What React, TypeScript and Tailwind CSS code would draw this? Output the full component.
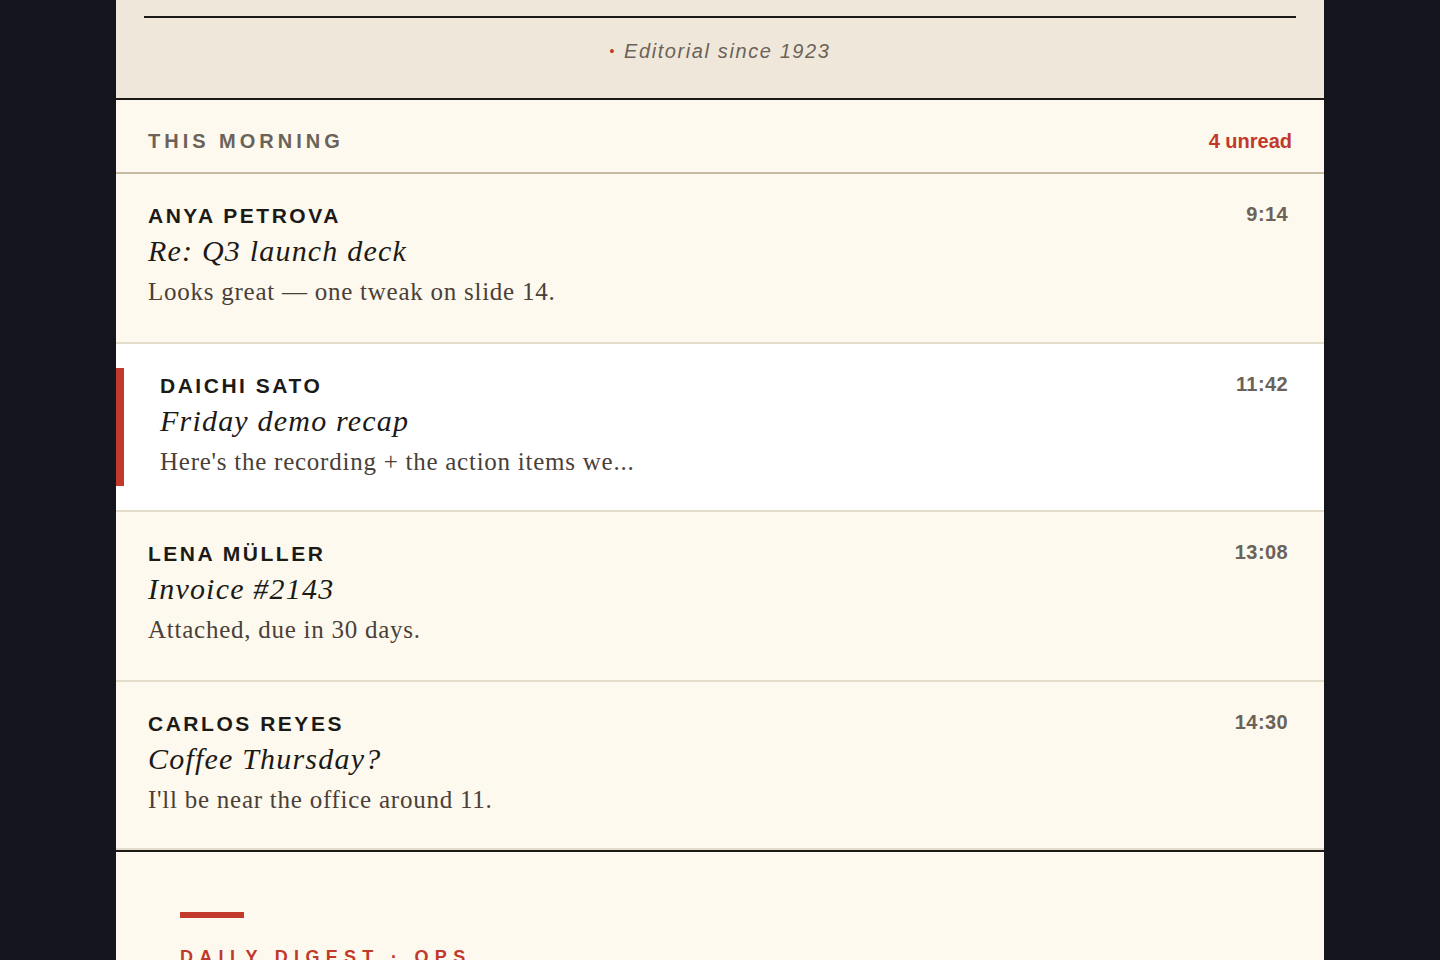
const messages: { from: string; subject: string; preview: string; time: string; active?: boolean }[] = [
  { from: 'Anya Petrova', subject: 'Re: Q3 launch deck', preview: 'Looks great — one tweak on slide 14.', time: '9:14' },
  { from: 'Daichi Sato', subject: 'Friday demo recap', preview: "Here's the recording + the action items we...", time: '11:42', active: true },
  { from: 'Lena Müller', subject: 'Invoice #2143', preview: 'Attached, due in 30 days.', time: '13:08' },
  { from: 'Carlos Reyes', subject: 'Coffee Thursday?', preview: "I'll be near the office around 11.", time: '14:30' },
]

const sans = "font-['Liberation_Sans',Arial,sans-serif]"
const serif = "font-['Liberation_Serif','Times_New_Roman',serif]"

function MessageRow({ m, last }: { m: (typeof messages)[number]; last: boolean }) {
  let cls = 'relative flex items-start justify-between border-b-2 border-[#e4dccb] pr-9 '
  if (m.active) cls += 'bg-white pl-[44px] pt-7 pb-8'
  else if (last) cls += 'bg-[#fdf9ee] pl-8 pt-7 pb-8'
  else cls += 'bg-[#fdf9ee] pl-8 pt-7 pb-[34px]'

  return (
    <div className={cls}>
      {m.active && <span className="absolute bottom-6 left-0 top-6 w-2 bg-[#c0392b]" />}
      <div className="flex flex-col">
        <div className={`${sans} text-[21px] font-bold uppercase leading-[28px] tracking-[0.12em] text-[#1c1a17]`}>
          {m.from}
        </div>
        <div className={`${serif} mt-[3px] text-[30px] italic leading-[36px] tracking-[0.04em] text-[#1c1a17]`}>
          {m.subject}
        </div>
        <div className={`${serif} mt-[7px] text-[25px] leading-[32px] tracking-[0.03em] text-[#4a4038]`}>
          {m.preview}
        </div>
      </div>
      <div className={`${sans} text-[20px] font-bold leading-[24px] tracking-[0.02em] text-[#6b6259]`}>{m.time}</div>
    </div>
  )
}

export default function App() {
  return (
    <div className="min-h-screen bg-[#15151e]">
      <div className="mx-auto w-[1208px]">
        <header className="border-b-2 border-[#1c1a17] bg-[#efe8da] px-7 pb-[33px] pt-4">
          <div className="h-[2px] bg-[#1c1a17]" />
          <div className={`${sans} mt-[19px] flex items-center justify-center gap-2 text-[20px] italic leading-[28px] tracking-[0.08em] text-[#6b6259]`}>
            <span className="text-[14px] not-italic text-[#c0392b]">•</span>
            <span>Editorial since 1923</span>
          </div>
        </header>

        <div className="flex items-start justify-between border-b-2 border-[#c6baa3] bg-[#fdf9ee] pb-[17px] pl-8 pr-8 pt-[27px]">
          <span className={`${sans} text-[20px] font-bold uppercase leading-[28px] tracking-[0.2em] text-[#6b6259]`}>
            This morning
          </span>
          <span className={`${sans} text-[20px] font-bold leading-[28px] text-[#c0392b]`}>4 unread</span>
        </div>

        <div className="flex flex-col">
          {messages.map((m, i) => (
            <MessageRow key={m.from} m={m} last={i === messages.length - 1} />
          ))}
        </div>

        <section className="border-t-2 border-[#1c1a17] bg-[#fdf9ee] pb-16 pl-16 pt-[60px]">
          <div className="h-[6px] w-16 bg-[#c0392b]" />
          <div className={`${sans} mt-[27px] text-[18px] font-semibold uppercase leading-[24px] tracking-[0.35em] text-[#c0392b]`}>
            Daily digest · Ops
          </div>
          <div className={`${serif} mt-4 text-[40px] leading-[48px] text-[#1c1a17]`}>Your inbox, in brief</div>
        </section>
      </div>
    </div>
  )
}
